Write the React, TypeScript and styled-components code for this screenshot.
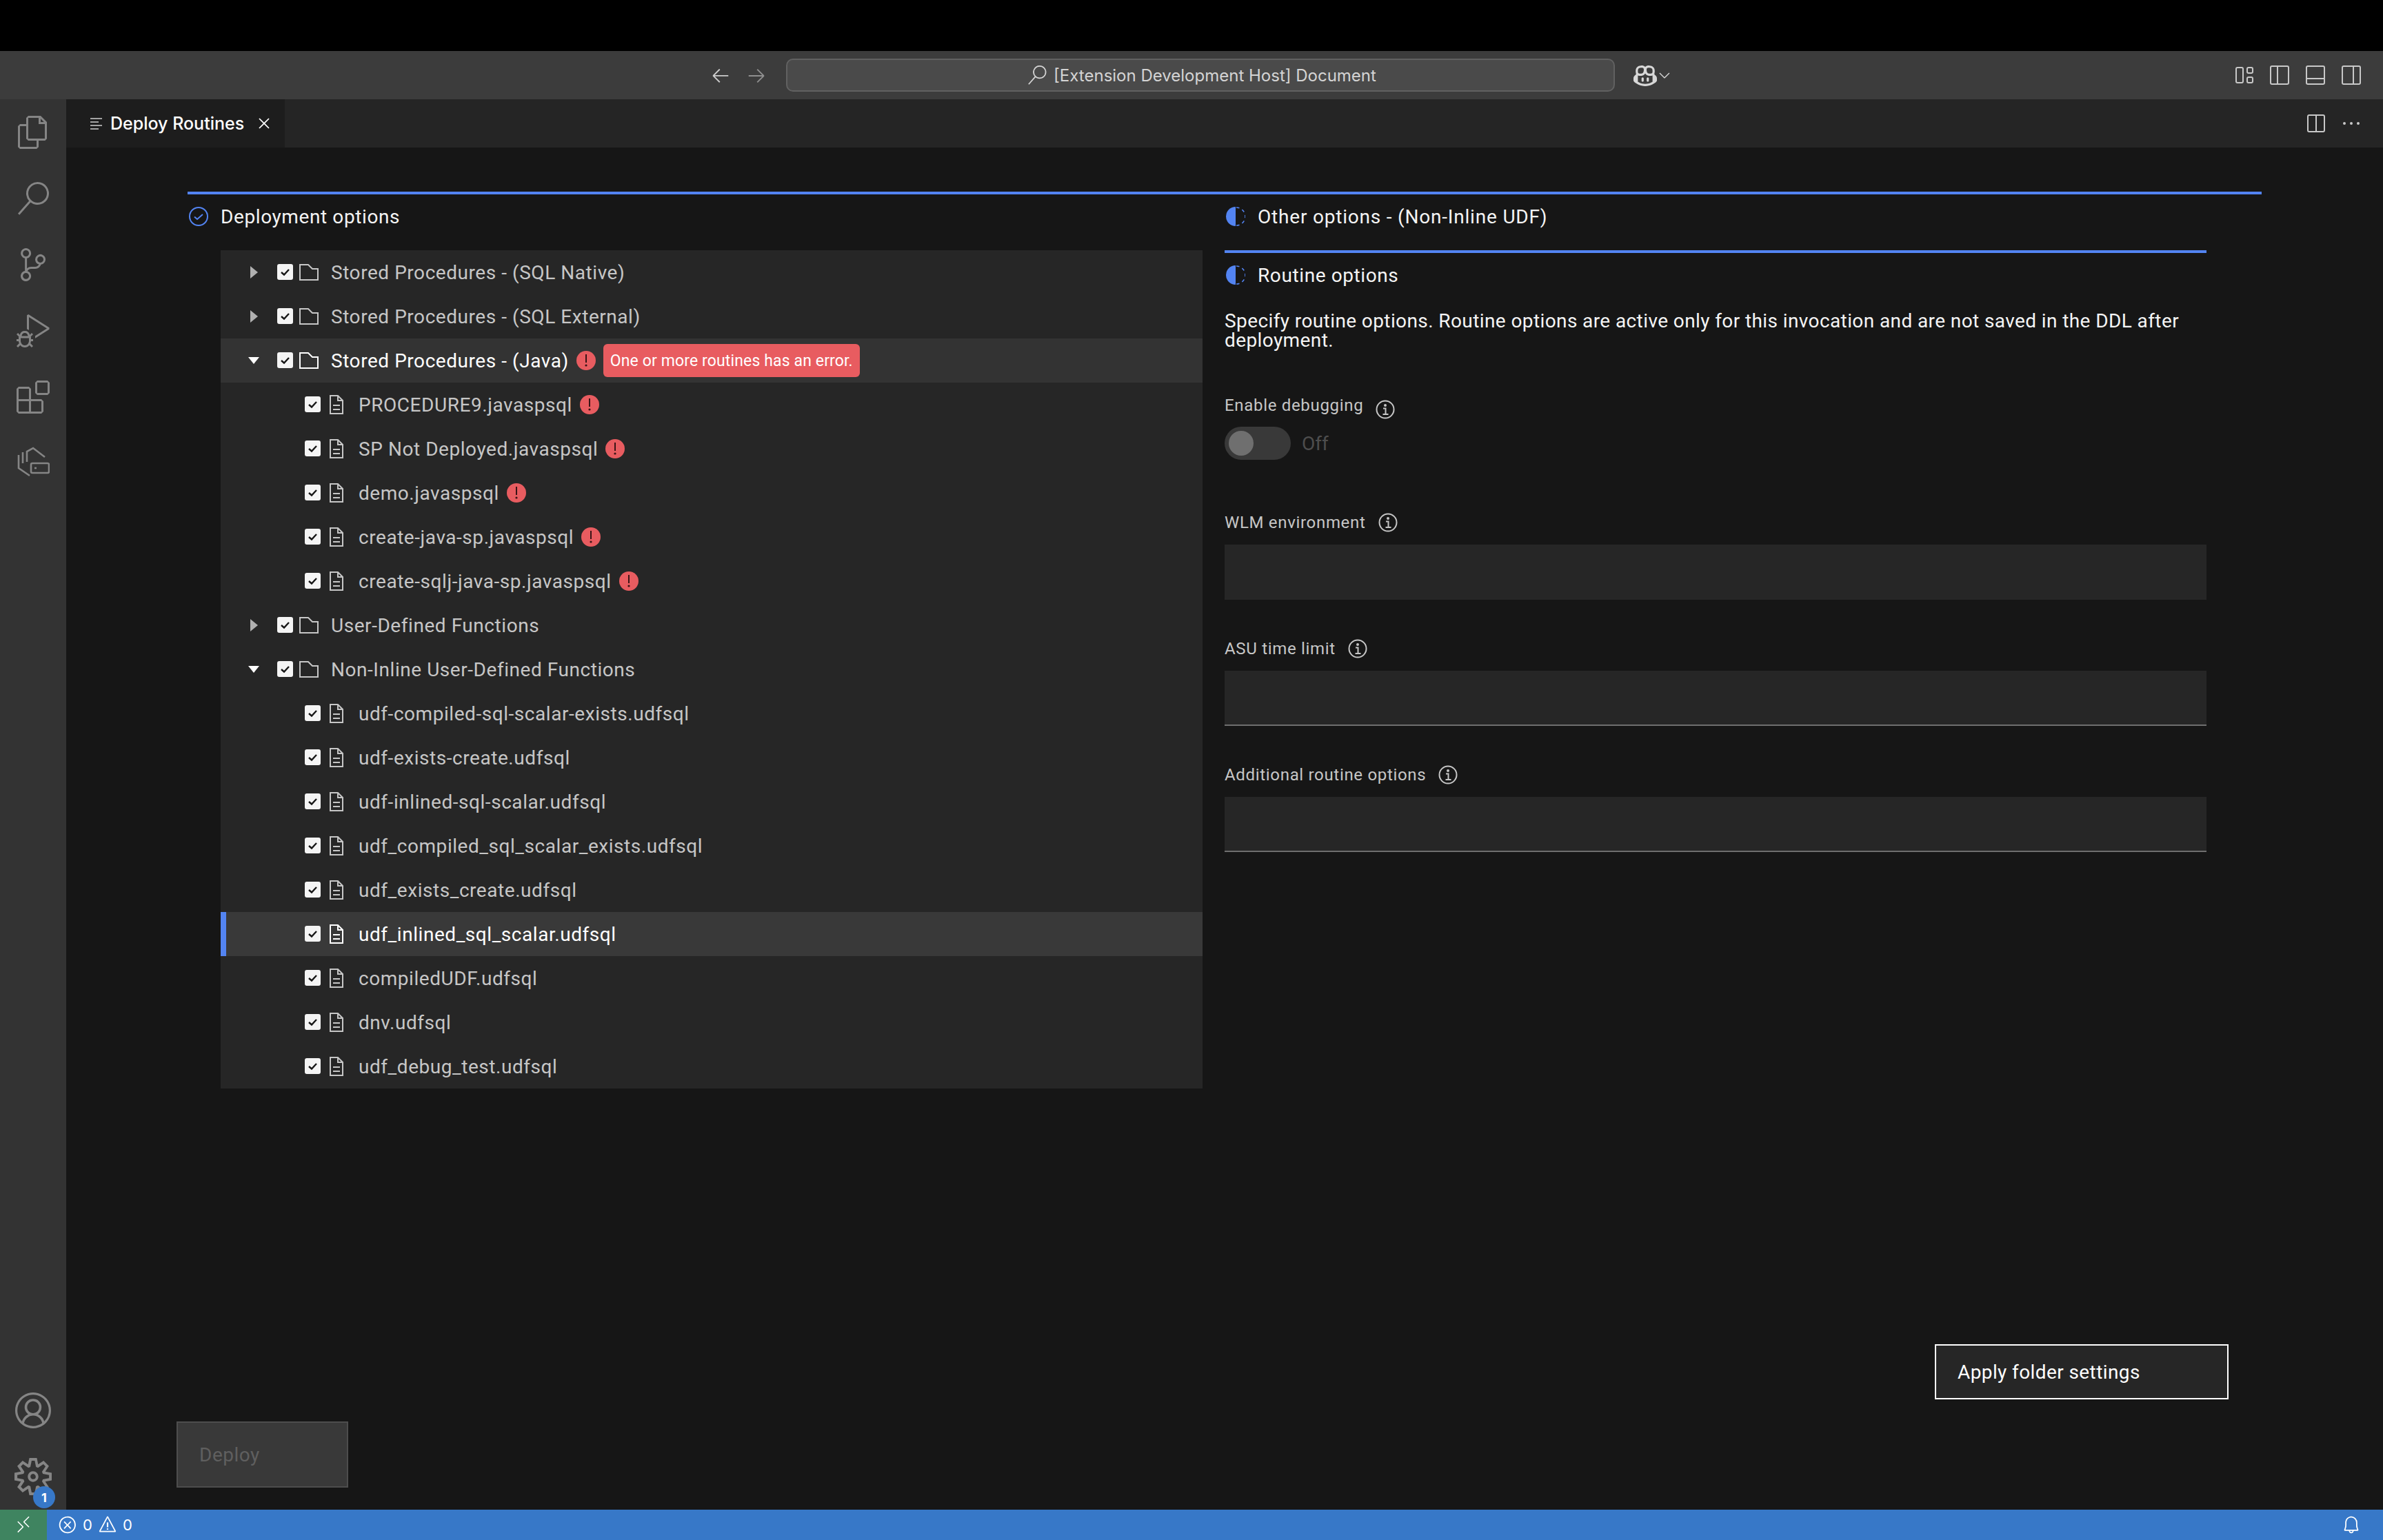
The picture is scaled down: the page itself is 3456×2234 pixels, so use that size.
import React from 'react';
import styled, { createGlobalStyle } from 'styled-components';
import {
  VscFiles, VscSearch, VscSourceControl, VscDebugAlt, VscExtensions, VscAccount, VscSettingsGear,
  VscRemote, VscError, VscWarning, VscBell, VscArrowLeft, VscArrowRight, VscChevronDown, VscClose,
  VscEllipsis, VscCopilot,
} from 'react-icons/vsc';

const PLEX = '"Roboto", "Liberation Sans", sans-serif';
const UI = '"Inter", "Liberation Sans", sans-serif';

const Global = createGlobalStyle`
  html, body { margin: 0; height: 100%; background: #000; overflow: hidden; }
  #root { height: 100%; }
  * { box-sizing: border-box; }
`;

const Page = styled.div`
  height: 100vh;
  display: flex;
  flex-direction: column;
  font-family: ${PLEX};
  color: #f4f4f4;
`;

const Notch = styled.div`
  height: 74px;
  background: #000;
`;

const TitleBar = styled.header`
  height: 70px;
  background: #3c3c3c;
  display: flex;
  align-items: center;
  padding: 0 32px 0 1030px;
  color: #cccccc;
`;

const NavArrow = styled.span<{ $dim?: boolean }>`
  display: flex;
  margin-right: 22px;
  color: ${(p) => (p.$dim ? '#8f8f8f' : '#cccccc')};
  svg { width: 30px; height: 30px; }
`;

const CommandBox = styled.div`
  width: 1202px;
  height: 48px;
  margin-left: 6px;
  padding-left: 4px;
  background: #4a4a4a;
  border: 2px solid #616161;
  border-radius: 10px;
  display: flex;
  align-items: center;
  justify-content: center;
  gap: 10px;
  font: 400 24px ${UI};
  color: #d4d4d4;
  svg { width: 28px; height: 28px; }
`;

const CopilotMenu = styled.div`
  display: flex;
  align-items: center;
  margin-left: 27px;
  color: #d8d8d8;
  svg:first-child { width: 34px; height: 34px; }
  svg:last-child { width: 24px; height: 24px; margin-left: -1px; }
`;

const LayoutIcons = styled.div`
  margin-left: auto;
  display: flex;
  align-items: center;
  gap: 24px;
  color: #c8c8c8;
`;

const Body = styled.div`
  flex: 1;
  min-height: 0;
  display: flex;
`;

const ActivityBar = styled.nav`
  width: 96px;
  background: #333333;
  display: flex;
  flex-direction: column;
`;

const ActivityItem = styled.div<{ $size?: number }>`
  height: 96px;
  display: flex;
  align-items: center;
  justify-content: center;
  position: relative;
  color: #858585;
  svg { width: ${(p) => p.$size ?? 48}px; height: ${(p) => p.$size ?? 48}px; }
`;

const ActivitySpacer = styled.div`
  flex: 1;
`;

const CountBadge = styled.span`
  position: absolute;
  left: 48px;
  top: 62px;
  width: 32px;
  height: 32px;
  border-radius: 50%;
  background: #3778c8;
  color: #fff;
  font: 700 18px ${UI};
  display: flex;
  align-items: center;
  justify-content: center;
`;

const Editor = styled.main`
  flex: 1;
  min-width: 0;
  display: flex;
  flex-direction: column;
  background: #161616;
`;

const TabBar = styled.div`
  height: 70px;
  flex: none;
  background: #252525;
  display: flex;
  align-items: center;
  padding-right: 30px;
  color: #c8c8c8;
`;

const Tab = styled.div`
  width: 317px;
  height: 100%;
  background: #1d1d1d;
  display: flex;
  align-items: center;
  padding-left: 35px;
  color: #ffffff;
  font: 500 25px ${UI};
`;

const TabTitle = styled.span`
  margin-left: 12px;
`;

const TabClose = styled.span`
  display: flex;
  margin-left: 15px;
  svg { width: 28px; height: 28px; }
`;

const TabActions = styled.div`
  margin-left: auto;
  display: flex;
  align-items: center;
  gap: 22px;
  svg:last-child { width: 32px; height: 32px; }
`;

const Content = styled.div`
  flex: 1;
  min-height: 0;
  display: flex;
  flex-direction: column;
`;

const Steps = styled.section`
  margin: 64px 0 0 176px;
  width: 3008px;
  border-top: 4px solid #5384f2;
  display: grid;
  grid-template-columns: 1504px 1424px;
`;

const Heading = styled.div`
  height: 81px;
  display: flex;
  align-items: center;
  gap: 18px;
  padding: 0 0 17px 2px;
  font-size: 28px;
  letter-spacing: 0.6px;
  color: #f4f4f4;
`;

const WideHeadingText = styled.span`
  letter-spacing: 0.8px;
`;

const Tree = styled.div`
  margin-left: 48px;
  width: 1424px;
  background: #262626;
`;

const Row = styled.div<{ $file?: boolean; $hover?: boolean; $selected?: boolean }>`
  height: 64px;
  display: flex;
  align-items: center;
  padding-left: ${(p) => (p.$file ? '122px' : '40px')};
  font-size: 28px;
  letter-spacing: 0.55px;
  background: ${(p) => (p.$selected ? '#393939' : p.$hover ? '#333333' : 'transparent')};
  box-shadow: ${(p) => (p.$selected ? 'inset 8px 0 0 #5384f2' : 'none')};
  color: ${(p) => (p.$selected || p.$hover ? '#ffffff' : '#c6c6c6')};
`;

const Caret = styled.svg`
  width: 16px;
  height: 18px;
  flex: none;
  margin-right: 26px;
`;

const CheckBox = styled.span`
  width: 23px;
  height: 23px;
  flex: none;
  border-radius: 3px;
  background: #f4f4f4;
  margin-top: -2px;
  display: flex;
  align-items: center;
  justify-content: center;
`;

const FolderGlyph = styled.svg`
  width: 28px;
  height: 24px;
  flex: none;
  margin: 0 18px 0 9px;
`;

const FileGlyph = styled.svg`
  width: 20px;
  height: 28px;
  flex: none;
  margin: 0 22px 0 13px;
`;

const ErrorDot = styled.span`
  width: 28px;
  height: 28px;
  flex: none;
  margin-left: 11px;
  border-radius: 50%;
  background: #e85c60;
  display: flex;
  align-items: center;
  justify-content: center;
`;

const ErrorTag = styled.span`
  margin-left: 11px;
  height: 48px;
  padding: 0 10px;
  border-radius: 6px;
  background: #e85c60;
  color: #fff;
  font-size: 23px;
  letter-spacing: 0.13px;
  display: flex;
  align-items: center;
`;

const OptionsPanel = styled.div`
  border-top: 4px solid #5384f2;
`;

const PanelHeading = styled(Heading)`
  height: 64px;
  padding-bottom: 0;
`;

const Description = styled.p`
  margin: 21px 0 0;
  font-size: 28px;
  line-height: 28px;
  letter-spacing: 0.4px;
  color: #f4f4f4;
`;

const Field = styled.div<{ $gap: number }>`
  margin-top: ${(p) => p.$gap}px;
`;

const FieldLabel = styled.div`
  height: 32px;
  display: flex;
  align-items: center;
  gap: 16px;
  font-size: 24px;
  letter-spacing: 0.68px;
  color: #c6c6c6;
`;

const InfoGlyph = styled.svg<{ $low?: boolean }>`
  width: 28px;
  height: 28px;
  flex: none;
  margin-top: ${(p) => (p.$low ? '12px' : '0')};
  margin-left: 2px;
`;

const TextField = styled.input<{ $underline?: boolean }>`
  display: block;
  width: 100%;
  height: 80px;
  margin-top: 16px;
  background: #262626;
  border: 0;
  border-bottom: 2px solid ${(p) => (p.$underline ? '#6f6f6f' : 'transparent')};
  outline: 0;
`;

const ToggleRow = styled.div`
  margin-top: 15px;
  display: flex;
  align-items: center;
  gap: 16px;
  font-size: 28px;
  color: #4d4d4d;
`;

const Track = styled.span`
  width: 96px;
  height: 48px;
  border-radius: 24px;
  background: #393939;
  display: flex;
  align-items: center;
  padding-left: 6px;
`;

const Knob = styled.span`
  width: 36px;
  height: 36px;
  border-radius: 50%;
  background: #6f6f6f;
`;

const Footer = styled.div`
  margin-top: auto;
  display: flex;
  justify-content: space-between;
  padding: 0 224px 32px 160px;
`;

const DeployButton = styled.button`
  width: 249px;
  height: 96px;
  margin-top: 112px;
  background: #393939;
  border: 2px solid #4d4d4d;
  color: #5f5f5f;
  font: 400 28px ${PLEX};
  letter-spacing: 0.5px;
  text-align: left;
  padding: 0 0 0 31px;
`;

const ApplyButton = styled.button`
  width: 426px;
  height: 80px;
  background: #262626;
  border: 2px solid #ffffff;
  color: #ffffff;
  font: 400 28px ${PLEX};
  letter-spacing: 0.4px;
  text-align: left;
  padding: 0 0 0 31px;
`;

const StatusBar = styled.footer`
  height: 44px;
  flex: none;
  background: #3778c8;
  display: flex;
  align-items: center;
  color: #fff;
  font: 400 22px ${UI};
  padding-right: 32px;
`;

const RemoteBox = styled.div`
  width: 68px;
  height: 100%;
  background: #3f8460;
  display: flex;
  align-items: center;
  justify-content: center;
  svg { width: 28px; height: 28px; }
`;

const Problems = styled.div`
  margin-left: 16px;
  display: flex;
  align-items: center;
  gap: 8px;
  svg { width: 28px; height: 28px; }
`;

const Bell = styled.span`
  margin-left: auto;
  display: flex;
  svg { width: 28px; height: 28px; }
`;

const CheckMark = () => (
  <svg width="17" height="17" viewBox="0 0 17 17" fill="none" stroke="#161616" strokeWidth="2.4">
    <path d="M3 9l4 3.5L14 5" />
  </svg>
);

const Folder = () => (
  <FolderGlyph viewBox="0 0 28 24" fill="none" stroke="currentColor" strokeWidth="2">
    <path d="M1 1h12l6 6h8v16H1z" />
  </FolderGlyph>
);

const FileIcon = () => (
  <FileGlyph viewBox="0 0 20 28" fill="none" stroke="currentColor" strokeWidth="2">
    <path d="M1 1h11l7 7v19H1zM12 1v7h7M5 15h10M5 21h10" />
  </FileGlyph>
);

const Bang = () => (
  <svg width="6" height="20" viewBox="0 0 6 20" fill="#3a1416">
    <path d="M2 1h2v12H2z" />
    <circle cx="3" cy="17" r="1.6" />
  </svg>
);

const Info = ({ low }: { low?: boolean }) => (
  <InfoGlyph $low={low} viewBox="0 0 28 28" fill="none" stroke="#c6c6c6" strokeWidth="2">
    <circle cx="14" cy="14" r="12.5" />
    <path d="M11 12.5h3.5V21M10.5 21h8" />
    <circle cx="14" cy="8" r="1" fill="#c6c6c6" />
  </InfoGlyph>
);

const Incomplete = () => (
  <svg width="28" height="28" viewBox="0 0 28 28" fill="none">
    <path d="M14 0A14 14 0 0 0 14 28z" fill="#5384f2" />
    <path d="M15 1A13 13 0 0 1 15 27" stroke="#5384f2" strokeWidth="1.6" strokeDasharray="4.5 4.5" />
  </svg>
);

const Complete = () => (
  <svg width="28" height="28" viewBox="0 0 28 28" fill="none" stroke="#5384f2" strokeWidth="2">
    <circle cx="14" cy="14" r="13" />
    <path d="M8 14.5l4 3.5 8-7" />
  </svg>
);

const CaretIcon = ({ open }: { open?: boolean }) => (
  <Caret viewBox="0 0 16 18">
    {open ? <path d="M0 4h16l-8 10z" fill="#ffffff" /> : <path d="M3 0l11 9-11 9z" fill="#b0b0b0" />}
  </Caret>
);

const LayoutGlyph = ({ line }: { line: 'left' | 'bottom' | 'right' }) => (
  <svg width="28" height="28" viewBox="0 0 28 28" fill="none" stroke="currentColor" strokeWidth="2">
    <rect x="1" y="1" width="26" height="26" rx="2" />
    {line === 'left' && <path d="M11 1v26" />}
    {line === 'bottom' && <path d="M1 19h26" />}
    {line === 'right' && <path d="M17 1v26" />}
  </svg>
);

const CustomLayoutGlyph = () => (
  <svg width="26" height="24" viewBox="0 0 26 24" fill="none" stroke="currentColor" strokeWidth="2">
    <rect x="1" y="1" width="10" height="22" rx="2" />
    <rect x="17" y="1" width="8" height="8" rx="2" />
    <rect x="17" y="15" width="8" height="8" rx="2" />
  </svg>
);

const SplitGlyph = () => (
  <svg width="26" height="26" viewBox="0 0 26 26" fill="none" stroke="currentColor" strokeWidth="2">
    <rect x="1" y="1" width="24" height="24" rx="2" />
    <path d="M13 1v24" />
  </svg>
);

const ListGlyph = () => (
  <svg width="17" height="18" viewBox="0 0 17 18" fill="none" stroke="#d0d0d0" strokeWidth="1.6">
    <path d="M0 2h17M0 7h12M0 12h17M0 17h12" />
  </svg>
);

const ConnectionGlyph = () => (
  <svg viewBox="0 0 48 48" fill="none" stroke="currentColor" strokeWidth="2.6">
    <path d="M15 22V7l9-5 17 13" />
    <path d="M9 8v16M3 12v19l16 11" />
    <rect x="21" y="24" width="26" height="14" rx="2" />
    <path d="M26 31h3" />
  </svg>
);

type TreeItem = {
  label: string;
  kind: 'closed' | 'open' | 'file';
  error?: boolean;
  tag?: string;
  hover?: boolean;
  selected?: boolean;
};

const items: TreeItem[] = [
  { label: 'Stored Procedures - (SQL Native)', kind: 'closed' },
  { label: 'Stored Procedures - (SQL External)', kind: 'closed' },
  { label: 'Stored Procedures - (Java)', kind: 'open', error: true, tag: 'One or more routines has an error.', hover: true },
  { label: 'PROCEDURE9.javaspsql', kind: 'file', error: true },
  { label: 'SP Not Deployed.javaspsql', kind: 'file', error: true },
  { label: 'demo.javaspsql', kind: 'file', error: true },
  { label: 'create-java-sp.javaspsql', kind: 'file', error: true },
  { label: 'create-sqlj-java-sp.javaspsql', kind: 'file', error: true },
  { label: 'User-Defined Functions', kind: 'closed' },
  { label: 'Non-Inline User-Defined Functions', kind: 'open' },
  { label: 'udf-compiled-sql-scalar-exists.udfsql', kind: 'file' },
  { label: 'udf-exists-create.udfsql', kind: 'file' },
  { label: 'udf-inlined-sql-scalar.udfsql', kind: 'file' },
  { label: 'udf_compiled_sql_scalar_exists.udfsql', kind: 'file' },
  { label: 'udf_exists_create.udfsql', kind: 'file' },
  { label: 'udf_inlined_sql_scalar.udfsql', kind: 'file', selected: true },
  { label: 'compiledUDF.udfsql', kind: 'file' },
  { label: 'dnv.udfsql', kind: 'file' },
  { label: 'udf_debug_test.udfsql', kind: 'file' },
];

export default function App() {
  return (
    <Page>
      <Global />
      <Notch />
      <TitleBar>
        <NavArrow><VscArrowLeft /></NavArrow>
        <NavArrow $dim><VscArrowRight /></NavArrow>
        <CommandBox>
          <VscSearch />
          [Extension Development Host] Document
        </CommandBox>
        <CopilotMenu>
          <VscCopilot />
          <VscChevronDown />
        </CopilotMenu>
        <LayoutIcons>
          <CustomLayoutGlyph />
          <LayoutGlyph line="left" />
          <LayoutGlyph line="bottom" />
          <LayoutGlyph line="right" />
        </LayoutIcons>
      </TitleBar>
      <Body>
        <ActivityBar>
          <ActivityItem><VscFiles /></ActivityItem>
          <ActivityItem><VscSearch /></ActivityItem>
          <ActivityItem><VscSourceControl /></ActivityItem>
          <ActivityItem><VscDebugAlt /></ActivityItem>
          <ActivityItem><VscExtensions /></ActivityItem>
          <ActivityItem><ConnectionGlyph /></ActivityItem>
          <ActivitySpacer />
          <ActivityItem $size={52}><VscAccount /></ActivityItem>
          <ActivityItem $size={54}>
            <VscSettingsGear />
            <CountBadge>1</CountBadge>
          </ActivityItem>
        </ActivityBar>
        <Editor>
          <TabBar>
            <Tab>
              <ListGlyph />
              <TabTitle>Deploy Routines</TabTitle>
              <TabClose><VscClose /></TabClose>
            </Tab>
            <TabActions>
              <SplitGlyph />
              <VscEllipsis />
            </TabActions>
          </TabBar>
          <Content>
            <Steps>
              <div>
                <Heading>
                  <Complete />
                  Deployment options
                </Heading>
                <Tree>
                  {items.map((item) => (
                    <Row key={item.label} $file={item.kind === 'file'} $hover={item.hover} $selected={item.selected}>
                      {item.kind !== 'file' && <CaretIcon open={item.kind === 'open'} />}
                      <CheckBox><CheckMark /></CheckBox>
                      {item.kind === 'file' ? <FileIcon /> : <Folder />}
                      {item.label}
                      {item.error && <ErrorDot><Bang /></ErrorDot>}
                      {item.tag && <ErrorTag>{item.tag}</ErrorTag>}
                    </Row>
                  ))}
                </Tree>
              </div>
              <div>
                <Heading>
                  <Incomplete />
                  <WideHeadingText>Other options - (Non-Inline UDF)</WideHeadingText>
                </Heading>
                <OptionsPanel>
                  <PanelHeading>
                    <Incomplete />
                    Routine options
                  </PanelHeading>
                  <Description>
                    Specify routine options. Routine options are active only for this invocation and are not saved in the DDL after deployment.
                  </Description>
                  <Field $gap={64}>
                    <FieldLabel>Enable debugging <Info low /></FieldLabel>
                    <ToggleRow>
                      <Track><Knob /></Track>
                      Off
                    </ToggleRow>
                  </Field>
                  <Field $gap={75}>
                    <FieldLabel>WLM environment <Info /></FieldLabel>
                    <TextField aria-label="WLM environment" />
                  </Field>
                  <Field $gap={55}>
                    <FieldLabel>ASU time limit <Info /></FieldLabel>
                    <TextField $underline aria-label="ASU time limit" />
                  </Field>
                  <Field $gap={55}>
                    <FieldLabel>Additional routine options <Info /></FieldLabel>
                    <TextField $underline aria-label="Additional routine options" />
                  </Field>
                </OptionsPanel>
              </div>
            </Steps>
            <Footer>
              <DeployButton>Deploy</DeployButton>
              <ApplyButton>Apply folder settings</ApplyButton>
            </Footer>
          </Content>
        </Editor>
      </Body>
      <StatusBar>
        <RemoteBox><VscRemote /></RemoteBox>
        <Problems>
          <VscError /> 0 <VscWarning /> 0
        </Problems>
        <Bell><VscBell /></Bell>
      </StatusBar>
    </Page>
  );
}
